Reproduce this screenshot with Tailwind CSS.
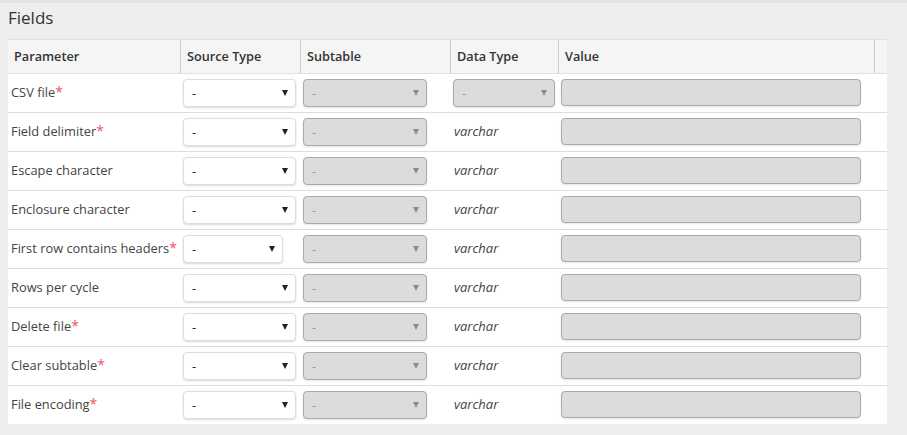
<!DOCTYPE html>
<html lang="en">
<head>
  <meta charset="UTF-8">
  <title>Fields</title>
  <script src="https://cdn.jsdelivr.net/npm/@tailwindcss/browser@4"></script>
</head>
<body class="bg-[#eeeeee] font-['Open_Sans',sans-serif] text-[12.85px] text-[#444] overflow-hidden">
  <div class="h-[435px] w-[907px] border-t-[3px] border-[#e5e5e5] pl-2">
    <h2 class="h-9 pt-[5px] text-[17px] leading-5 text-[#333]">Fields</h2>

    <div class="w-[879px] bg-white">
      <!-- header -->
      <div class="grid h-[35px] grid-cols-[173px_120px_150px_108px_316px_1fr] border-y border-[#e0e0e0] bg-[#f5f5f5] text-[12.7px] font-semibold leading-[33px] text-[#333]">
        <div class="border-r border-[#ccc] pl-1.5">Parameter</div>
        <div class="border-r border-[#ccc] pl-1.5">Source Type</div>
        <div class="border-r border-[#ccc] pl-1.5">Subtable</div>
        <div class="border-r border-[#ccc] pl-1.5">Data Type</div>
        <div class="border-r border-[#ccc] pl-1.5">Value</div>
        <div></div>
      </div>

      <!-- rows -->
      <div id="rows"></div>
    </div>
  </div>

  <script>
    const fields = [
      ['CSV file', true],
      ['Field delimiter', true],
      ['Escape character', false],
      ['Enclosure character', false],
      ['First row contains headers', true],
      ['Rows per cycle', false],
      ['Delete file', true],
      ['Clear subtable', true],
      ['File encoding', true]
    ];

    const disabledSelect = (width) => `
      <div class="flex h-7 ${width} items-center justify-between rounded-[4px] border border-[#aaa] bg-[#dcdcdc] pl-2 pr-[7px] text-[#999] shadow-[0_1px_2px_rgba(0,0,0,0.1)]">
        <span class="pt-[2px]">-</span>
        <svg width="6" height="6" viewBox="0 0 6 6"><path d="M0 0h6L3 6z" fill="#8a8a8a"/></svg>
      </div>`;

    const rows = fields.map(([name, required], i) => `
      <div class="grid ${i === fields.length - 1 ? 'h-[38px]' : 'h-[39px] border-b border-[#ddd]'} grid-cols-[173px_120px_150px_108px_1fr] items-center">
        <div class="mb-[2px] h-5 pl-[3px] leading-5 whitespace-nowrap">${name}${required ? '<span class="text-[14px] leading-none text-[#f4505c]">*</span>' : ''}</div>
        <div class="pl-[2px]">
          <div class="flex h-7 ${i === 4 ? 'w-[100px]' : 'w-[113px]'} items-center justify-between rounded-[4px] border border-[#ddd] bg-white pl-2 pr-[7px] text-[#222] shadow-[0_1px_2px_rgba(0,0,0,0.15)]">
            <span class="pt-[2px]">-</span>
            <svg width="6" height="6" viewBox="0 0 6 6"><path d="M0 0h6L3 6z" fill="#222"/></svg>
          </div>
        </div>
        <div class="pl-[2px]">${disabledSelect('w-[124px]')}</div>
        <div class="pl-[2px]">${i === 0 ? disabledSelect('w-[102px]') : '<span class="pl-[1px] text-[13px] italic">varchar</span>'}</div>
        <div class="pl-[2px]">
          <div class="mb-px h-[27px] w-[300px] rounded-[4px] border border-[#aaa] bg-[#dcdcdc] shadow-[0_1px_2px_rgba(0,0,0,0.1)]"></div>
        </div>
      </div>`).join('');
    document.getElementById('rows').innerHTML = rows;
  </script>
</body>
</html>
